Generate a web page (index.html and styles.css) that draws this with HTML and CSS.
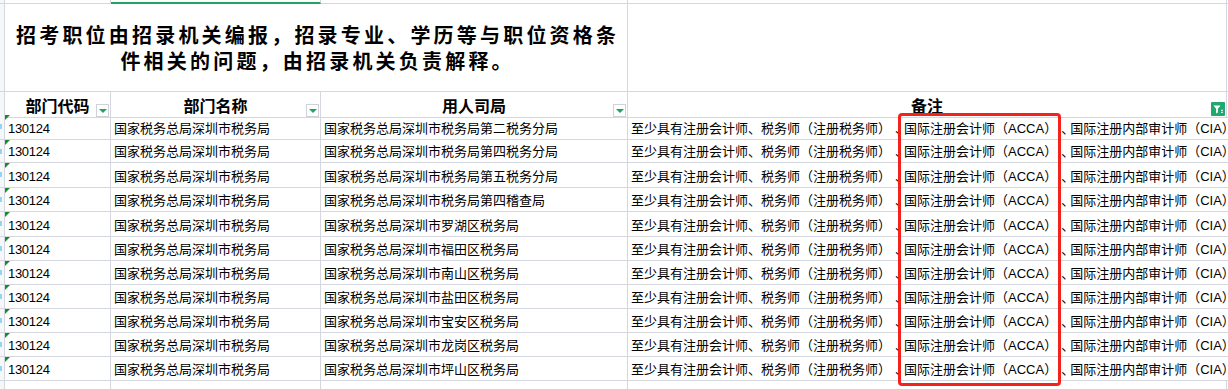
FILE: index.html
```html
<!DOCTYPE html>
<html lang="zh">
<head>
<meta charset="utf-8">
<link rel="stylesheet" href="styles.css">
</head>
<body>
<div class="sheet">
  <div class="row sliver">
    <div class="c gut"></div><div class="c"></div><div class="c sel"></div><div class="c"></div><div class="c"></div><div class="c e"></div>
  </div>
  <div class="row title">
    <div class="c gut"></div>
    <div class="c merged"><p>招考职位由招录机关编报，招录专业、学历等与职位资格条</p><p>件相关的问题，由招录机关负责解释。</p></div>
    <div class="c"></div><div class="c e"></div>
  </div>
  <div class="row head">
    <div class="c gut"></div>
    <div class="c h">部门代码<span class="fbtn"></span></div>
    <div class="c h">部门名称<span class="fbtn"></span></div>
    <div class="c h">用人司局<span class="fbtn"></span></div>
    <div class="c h">备注<span class="fbtn on"><svg width="14" height="14" viewBox="0 0 14 14"><path d="M2.5 3.5h7l-2.6 3.2v3.8l-1.8 1v-4.8z" fill="#fff"/><path d="M10 8.3h2M10 10.3h2" stroke="#fff" stroke-width="1"/></svg></span></div>
    <div class="c e"></div>
  </div>
  <div class="row data r25"><div class="c gut"></div><div class="c a">130124</div><div class="c">国家税务总局深圳市税务局</div><div class="c">国家税务总局深圳市税务局第二税务分局</div><div class="c d"><span>至少具有注册会计师、税务师（注册税务师）<span class="dun">、</span>国际注册会计师（ACCA）<span class="dun">、</span>国际注册内部审计师（CIA）</span></div><div class="c e"></div></div>
  <div class="row data r23"><div class="c gut"></div><div class="c a">130124</div><div class="c">国家税务总局深圳市税务局</div><div class="c">国家税务总局深圳市税务局第四税务分局</div><div class="c d"><span>至少具有注册会计师、税务师（注册税务师）<span class="dun">、</span>国际注册会计师（ACCA）<span class="dun">、</span>国际注册内部审计师（CIA）</span></div><div class="c e"></div></div>
  <div class="row data r25"><div class="c gut"></div><div class="c a">130124</div><div class="c">国家税务总局深圳市税务局</div><div class="c">国家税务总局深圳市税务局第五税务分局</div><div class="c d"><span>至少具有注册会计师、税务师（注册税务师）<span class="dun">、</span>国际注册会计师（ACCA）<span class="dun">、</span>国际注册内部审计师（CIA）</span></div><div class="c e"></div></div>
  <div class="row data"><div class="c gut"></div><div class="c a">130124</div><div class="c">国家税务总局深圳市税务局</div><div class="c">国家税务总局深圳市税务局第四稽查局</div><div class="c d"><span>至少具有注册会计师、税务师（注册税务师）<span class="dun">、</span>国际注册会计师（ACCA）<span class="dun">、</span>国际注册内部审计师（CIA）</span></div><div class="c e"></div></div>
  <div class="row data r25"><div class="c gut"></div><div class="c a">130124</div><div class="c">国家税务总局深圳市税务局</div><div class="c">国家税务总局深圳市罗湖区税务局</div><div class="c d"><span>至少具有注册会计师、税务师（注册税务师）<span class="dun">、</span>国际注册会计师（ACCA）<span class="dun">、</span>国际注册内部审计师（CIA）</span></div><div class="c e"></div></div>
  <div class="row data"><div class="c gut"></div><div class="c a">130124</div><div class="c">国家税务总局深圳市税务局</div><div class="c">国家税务总局深圳市福田区税务局</div><div class="c d"><span>至少具有注册会计师、税务师（注册税务师）<span class="dun">、</span>国际注册会计师（ACCA）<span class="dun">、</span>国际注册内部审计师（CIA）</span></div><div class="c e"></div></div>
  <div class="row data"><div class="c gut"></div><div class="c a">130124</div><div class="c">国家税务总局深圳市税务局</div><div class="c">国家税务总局深圳市南山区税务局</div><div class="c d"><span>至少具有注册会计师、税务师（注册税务师）<span class="dun">、</span>国际注册会计师（ACCA）<span class="dun">、</span>国际注册内部审计师（CIA）</span></div><div class="c e"></div></div>
  <div class="row data"><div class="c gut"></div><div class="c a">130124</div><div class="c">国家税务总局深圳市税务局</div><div class="c">国家税务总局深圳市盐田区税务局</div><div class="c d"><span>至少具有注册会计师、税务师（注册税务师）<span class="dun">、</span>国际注册会计师（ACCA）<span class="dun">、</span>国际注册内部审计师（CIA）</span></div><div class="c e"></div></div>
  <div class="row data"><div class="c gut"></div><div class="c a">130124</div><div class="c">国家税务总局深圳市税务局</div><div class="c">国家税务总局深圳市宝安区税务局</div><div class="c d"><span>至少具有注册会计师、税务师（注册税务师）<span class="dun">、</span>国际注册会计师（ACCA）<span class="dun">、</span>国际注册内部审计师（CIA）</span></div><div class="c e"></div></div>
  <div class="row data"><div class="c gut"></div><div class="c a">130124</div><div class="c">国家税务总局深圳市税务局</div><div class="c">国家税务总局深圳市龙岗区税务局</div><div class="c d"><span>至少具有注册会计师、税务师（注册税务师）<span class="dun">、</span>国际注册会计师（ACCA）<span class="dun">、</span>国际注册内部审计师（CIA）</span></div><div class="c e"></div></div>
  <div class="row data"><div class="c gut"></div><div class="c a">130124</div><div class="c">国家税务总局深圳市税务局</div><div class="c">国家税务总局深圳市坪山区税务局</div><div class="c d"><span>至少具有注册会计师、税务师（注册税务师）<span class="dun">、</span>国际注册会计师（ACCA）<span class="dun">、</span>国际注册内部审计师（CIA）</span></div><div class="c e"></div></div>
  <div class="row tail"><div class="c gut"></div><div class="c"></div><div class="c"></div><div class="c"></div><div class="c"></div><div class="c e"></div></div>
  <div class="highlight"></div>
</div>
</body>
</html>
```

FILE: styles.css
```css
html, body {
  margin: 0;
  padding: 0;
  background: #fff;
  overflow: hidden;
  width: 1228px;
  height: 389px;
}
.sheet {
  position: relative;
  font-family: "Liberation Sans", "Noto Sans CJK SC", sans-serif;
  font-size: 13px;
  color: #000;
  text-spacing-trim: space-all;
}
.row {
  display: grid;
  grid-template-columns: 5px 106px 210px 307px 599px 1px;
}
.c {
  box-sizing: border-box;
  border-right: 1px solid #d4d7df;
  border-bottom: 1px solid #d4d7df;
  position: relative;
  min-width: 0;
}
.c.e { border-right: none; }
.gut { background: #f6f7f9; }
.sliver { height: 4px; }
.sliver .sel { border-bottom: 2px solid #21a366; }
.title { height: 88px; }
.merged {
  grid-column: span 3;
  display: flex;
  flex-direction: column;
  justify-content: center;
  align-items: center;
  font-family: "Noto Sans CJK SC", sans-serif;
  font-weight: 700;
  font-size: 20px;
  letter-spacing: 3.2px;
  line-height: 26px;
  padding-top: 1px;
}
.merged p { margin: 0; margin-right: -3.2px; white-space: nowrap; }
.head { height: 23px; }
.h {
  display: flex;
  align-items: center;
  justify-content: center;
  font-family: "Noto Sans CJK SC", sans-serif;
  font-weight: 700;
  font-size: 16px;
  padding-top: 1px;
}
.fbtn {
  position: absolute;
  right: 1px;
  bottom: 0;
  width: 13px;
  height: 13px;
  box-sizing: border-box;
  border: 1px solid #cfd3d8;
  background: #fff;
  display: flex;
  align-items: center;
  justify-content: center;
}
.fbtn::after {
  content: "";
  width: 0;
  height: 0;
  border-left: 4px solid transparent;
  border-right: 4px solid transparent;
  border-top: 4px solid #1fa463;
  margin-top: 1px;
}
.fbtn.on {
  right: 1px;
  bottom: 1px;
  width: 14px;
  height: 14px;
  border: none;
  background: #21a870;
  border-radius: 1px;
}
.fbtn.on::after { display: none; }
.fbtn.on svg { display: block; }
.data { height: 24px; }
.data.r25 { height: 25px; }
.data.r23 { height: 23px; }
.data .c {
  display: flex;
  align-items: flex-end;
  padding-left: 3px;
  padding-bottom: 2px;
  line-height: 16px;
  white-space: nowrap;
}
.data .gut { padding: 0; }
.data .gut::after {
  content: "";
  position: absolute;
  left: 0;
  top: 9px;
  width: 2px;
  height: 5px;
  background: #8fd6ee;
}
.data .a { letter-spacing: -0.3px; }
.data .a::before {
  content: "";
  position: absolute;
  left: 0;
  top: 0;
  width: 0;
  height: 0;
  border-top: 5px solid #1b8a2e;
  border-right: 5px solid transparent;
}
.data .d {
  border-right: none;
  overflow: visible;
  padding-left: 3px;
}
.dun {
  display: inline-block;
  width: 13px;
  padding-left: 4px;
  margin-right: -4px;
}
.tail { height: 20px; }
.highlight {
  position: absolute;
  left: 898px;
  top: 113px;
  width: 163px;
  height: 273px;
  box-sizing: border-box;
  border: 3px solid #f5221b;
  border-radius: 4px;
  pointer-events: none;
}
```
